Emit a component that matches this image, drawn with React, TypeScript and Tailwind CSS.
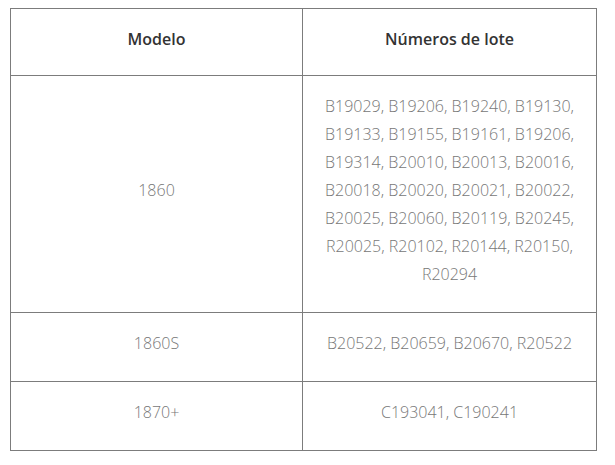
export default function App() {
  const rows = [
    {
      model: "1860",
      lots: "B19029, B19206, B19240, B19130, B19133, B19155, B19161, B19206, B19314, B20010, B20013, B20016, B20018, B20020, B20021, B20022, B20025, B20060, B20119, B20245, R20025, R20102, R20144, R20150, R20294",
    },
    { model: "1860S", lots: "B20522, B20659, B20670, R20522" },
    { model: "1870+", lots: "C193041, C190241" },
  ];
  return (
    <div className="w-[615px] h-[465px] bg-white pt-[8px] pl-[10px]" style={{ fontFamily: '"Open Sans", sans-serif' }}>
      <table className="w-[587px] border-collapse border border-[#7c7c7c] text-center text-[16px] leading-[28px] table-fixed">
        <thead>
          <tr>
            <th className="w-[292px] border border-[#7c7c7c] pt-4 pb-[22px] font-semibold text-[#333]">Modelo</th>
            <th className="border border-[#7c7c7c] pt-4 pb-[22px] font-semibold text-[#333]">Números de lote</th>
          </tr>
        </thead>
        <tbody>
          {rows.map((r, i) => (
            <tr key={i}>
              <td className="border border-[#7c7c7c] px-5 pt-4 pb-6 font-light text-[#777]">{r.model}</td>
              <td className="border border-[#7c7c7c] px-5 pt-4 pb-6 font-light text-[#777]">{r.lots}</td>
            </tr>
          ))}
        </tbody>
      </table>
    </div>
  );
}
